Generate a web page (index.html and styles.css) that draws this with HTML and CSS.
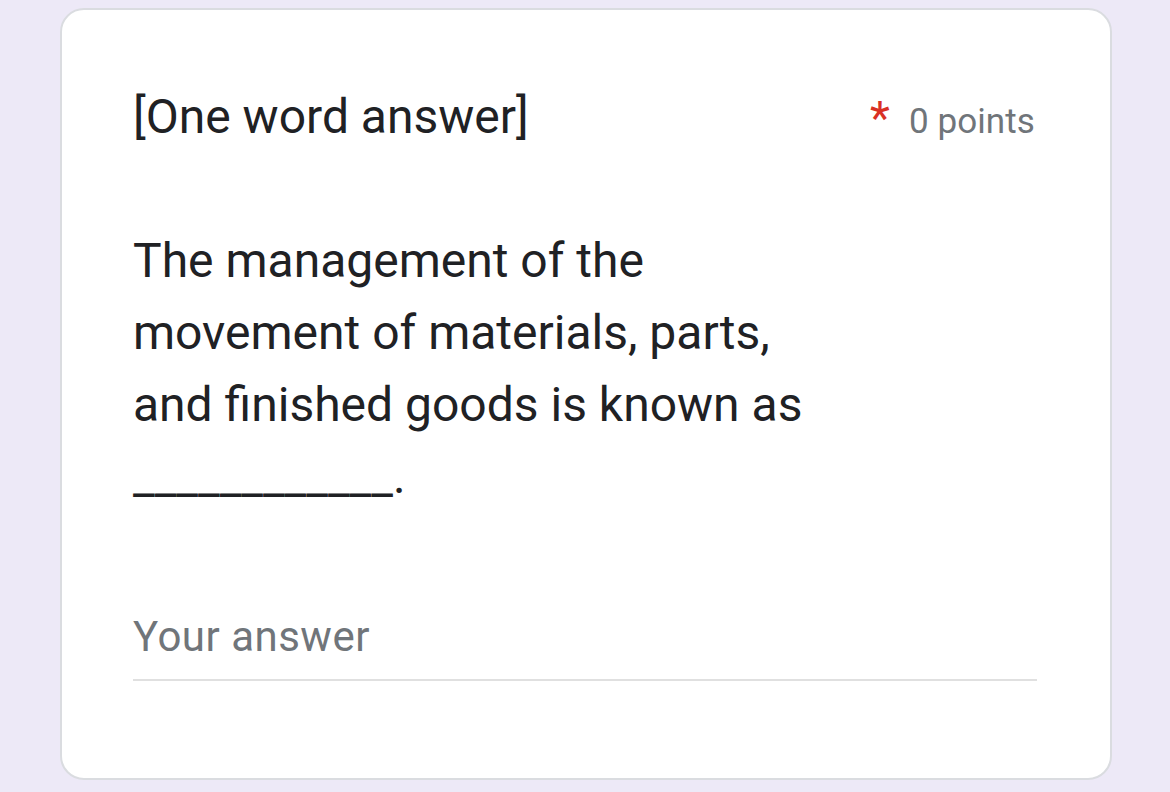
FILE: index.html
```html
<!DOCTYPE html>
<html>
<head>
<meta charset="utf-8">
<link rel="stylesheet" href="styles.css">
</head>
<body>
<div class="card">
  <div class="head">
    <div class="title">[One word answer]</div>
    <div class="meta"><span class="req">*</span><span class="pts">0 points</span></div>
  </div>
  <div class="question">The management of the<br>movement of materials, parts,<br>and finished goods is known as<br>____________.</div>
  <div class="answer">
    <div class="placeholder">Your answer</div>
  </div>
</div>
</body>
</html>
```
FILE: styles.css
```css
html, body { margin: 0; padding: 0; }
body {
  background: #ede9f7;
  width: 1170px;
  height: 792px;
  overflow: hidden;
  font-family: Roboto, "Liberation Sans", sans-serif;
}
.card {
  margin: 8px 0 0 60px;
  width: 1052px;
  height: 772px;
  box-sizing: border-box;
  background: #fff;
  border: 2px solid #dadce0;
  border-radius: 24px;
  padding: 77px 73px 0 71px;
}
.head {
  display: flex;
  justify-content: space-between;
  align-items: baseline;
  height: 60px;
}
.title {
  font-size: 48px;
  line-height: 60px;
  color: #202124;
}
.meta { display: flex; align-items: baseline; line-height: 60px; }
.req { color: #d93025; font-size: 46px; margin-right: 19px; position: relative; top: 1px; }
.pts { color: #70757a; font-size: 35px; letter-spacing: 0.1px; margin-right: 2px; }
.question {
  margin-top: 78px;
  font-size: 48px;
  line-height: 72px;
  color: #202124;
}
.answer {
  margin-top: 100px;
  border-bottom: 2px solid #e0e0e0;
  padding-bottom: 18px;
}
.placeholder {
  font-size: 42px;
  line-height: 48px;
  letter-spacing: 0.5px;
  color: #70757a;
}
```
